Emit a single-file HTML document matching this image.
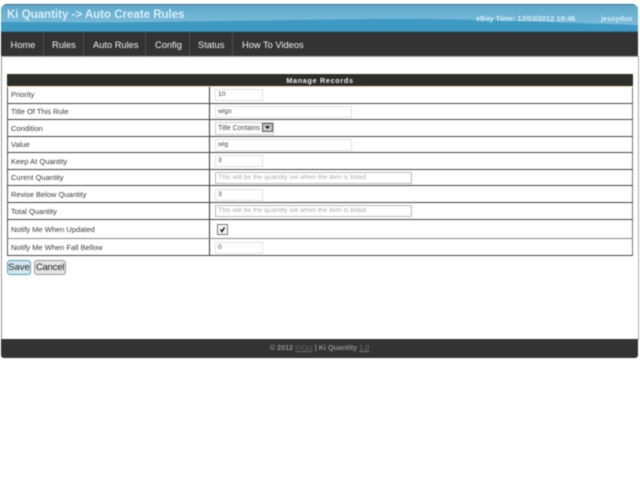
<!DOCTYPE html>
<html>
<head>
<meta charset="utf-8">
<style>
html,body{margin:0;padding:0;background:#fff;width:640px;height:480px;overflow:hidden}
body{font-family:"Liberation Sans",sans-serif;position:relative}
#w{position:absolute;left:0;top:0;width:640px;height:480px;filter:blur(.45px)}
.a{position:absolute}
.t{position:absolute;white-space:nowrap}
.h{left:1px;top:4px;width:637px;height:28px;border-radius:6px 6px 0 0;background:#3d97c0;overflow:hidden}
.h svg{position:absolute;left:0;top:0}
.n{left:1px;top:32px;width:637px;height:24px;background:#333;border-bottom:1px solid #aaa}
.n .t{color:#f2f2f2;font-size:9.3px;top:8px;line-height:11px}
.s{position:absolute;top:32px;width:1px;height:24px;background:#4d4d4d}
.l{position:absolute;left:7px;width:626px;height:1px;background:#444}
.lb{position:absolute;left:11px;font-size:7.5px;color:#3a3a3a;line-height:10px;white-space:nowrap}
.i{position:absolute;left:215px;height:10px;border:1px solid #e2e2e2;background:#fff;font-size:6.8px;line-height:10px;color:#444;padding-left:2px;white-space:nowrap;overflow:hidden}
.i.p{color:#aaa;border-color:#bbb;font-size:6.7px}
.b{position:absolute;top:260px;height:13px;border-radius:3px;font-size:9.5px;line-height:13px;text-align:center;color:#222}
</style>
</head>
<body>
<div id="w">
<div class="a" style="left:1px;top:56px;width:1px;height:284px;background:#999"></div>
<div class="a" style="left:638px;top:56px;width:1px;height:284px;background:#aaa"></div>

<div class="a h">
<svg width="637" height="28" viewBox="0 0 637 28"><defs><linearGradient id="g" x1="0" y1="0" x2="0" y2="1"><stop offset="0" stop-color="#5ea8ca"/><stop offset="1" stop-color="#7bbcd9"/></linearGradient></defs><rect width="637" height="28" fill="#3f9ac3"/><path d="M0 0H637V21C560 19 470 14 370 15C290 16 220 17 150 18C90 19 40 18 0 18Z" fill="url(#g)"/><rect y="0" width="637" height="1" fill="#2f6f8e"/><rect y="27" width="637" height="1" fill="#2f7ea3"/></svg>
</div>
<div class="t" style="left:7px;top:9px;font-size:11.5px;font-weight:bold;color:#d8eef8;line-height:13px">Ki Quantity -&gt; Auto Create Rules</div>
<div class="t" style="left:476px;top:14px;font-size:7.4px;font-weight:bold;color:#d5ebf5;line-height:9px">eBay Time: 12/03/2012 19:46</div>
<div class="t" style="left:601px;top:14px;font-size:7.4px;font-weight:bold;color:#d5ebf5;line-height:9px">jessydus</div>

<div class="a n">
<span class="t" style="left:9.5px">Home</span>
<span class="t" style="left:51px">Rules</span>
<span class="t" style="left:92px">Auto Rules</span>
<span class="t" style="left:154px">Config</span>
<span class="t" style="left:197px">Status</span>
<span class="t" style="left:241px">How To Videos</span>
</div>
<div class="s" style="left:43px"></div>
<div class="s" style="left:83px"></div>
<div class="s" style="left:145px"></div>
<div class="s" style="left:189px"></div>
<div class="s" style="left:232px"></div>

<div class="a" style="left:7px;top:74px;width:626px;height:12px;background:#2d2d2b"></div>
<div class="a" style="left:7px;top:86px;width:626px;height:1px;background:#f3e3b5"></div>
<div class="t" style="left:7px;top:75px;width:626px;text-align:center;color:#eee;font-size:7.2px;font-weight:bold;letter-spacing:.7px;line-height:11px">Manage Records</div>

<div class="a" style="left:7px;top:87px;width:1px;height:168px;background:#555"></div>
<div class="a" style="left:632px;top:87px;width:1px;height:168px;background:#777"></div>
<div class="a" style="left:209px;top:87px;width:1px;height:168px;background:#333"></div>

<div class="l" style="top:103px"></div>
<div class="l" style="top:119px"></div>
<div class="l" style="top:136px"></div>
<div class="l" style="top:152px"></div>
<div class="l" style="top:169px"></div>
<div class="l" style="top:185px"></div>
<div class="l" style="top:202px"></div>
<div class="l" style="top:219px"></div>
<div class="a" style="left:7px;top:238px;width:626px;height:1px;background:#888"></div>
<div class="l" style="top:255px"></div>

<div class="lb" style="top:90px">Priority</div>
<div class="lb" style="top:107px">Title Of This Rule</div>
<div class="lb" style="top:124px">Condition</div>
<div class="lb" style="top:140px">Value</div>
<div class="lb" style="top:157px">Keep At Quantity</div>
<div class="lb" style="top:173px">Curent Quantity</div>
<div class="lb" style="top:190px">Revise Below Quantity</div>
<div class="lb" style="top:207px">Total Quantity</div>
<div class="lb" style="top:225px">Notify Me When Updated</div>
<div class="lb" style="top:243px">Notify Me When Fall Bellow</div>

<div class="i" style="top:89px;width:44px">10</div>
<div class="i" style="top:106px;width:133px">wigs</div>
<div class="a" style="left:215px;top:122px;width:57px;height:11px;border:1px solid #ccc;background:#fff;font-size:6.9px;line-height:11px;color:#444;text-indent:2px;white-space:nowrap;overflow:hidden">Title Contains</div>
<div class="a" style="left:262px;top:123px;width:11px;height:9px;background:#c8c8c8;border:1px solid #555;box-sizing:border-box"></div>
<svg class="a" style="left:262px;top:123px" width="11" height="9"><path d="M3 3H8L5.5 6Z" fill="#111"/></svg>
<div class="i" style="top:139px;width:133px">wig</div>
<div class="i" style="top:155px;width:44px">3</div>
<div class="i p" style="top:172px;width:193px">This will be the quantity set when the item is listed</div>
<div class="i" style="top:189px;width:44px">3</div>
<div class="i p" style="top:205px;width:193px">This will be the quantity set when the item is listed</div>
<div class="a" style="left:217px;top:224px;width:9px;height:9px;border:1px solid #777;background:#f4f4f4"></div>
<svg class="a" style="left:217px;top:224px" width="11" height="11"><path d="M3.5 5.5L5 7.5L7.5 3.5" fill="none" stroke="#111" stroke-width="1.4"/></svg>
<div class="i" style="top:242px;width:44px">0</div>

<div class="b" style="left:7px;width:22px;background:#d3e8ee;border:1px solid #4f9fbf">Save</div>
<div class="b" style="left:34px;width:30px;background:#e4e4e4;border:1px solid #999;letter-spacing:-.2px">Cancel</div>

<div class="a" style="left:1px;top:339px;width:637px;height:19px;background:#333;border-radius:0 0 3px 3px"></div>
<div class="t" style="left:1px;top:343px;width:637px;text-align:center;font-size:7.2px;line-height:10px;color:#909090;font-weight:bold">© 2012 <span style="text-decoration:underline;color:#666;font-weight:normal">KiOui</span> | Ki Quantity <span style="text-decoration:underline;color:#777;font-weight:normal">1.0</span></div>
</div>
</body>
</html>
